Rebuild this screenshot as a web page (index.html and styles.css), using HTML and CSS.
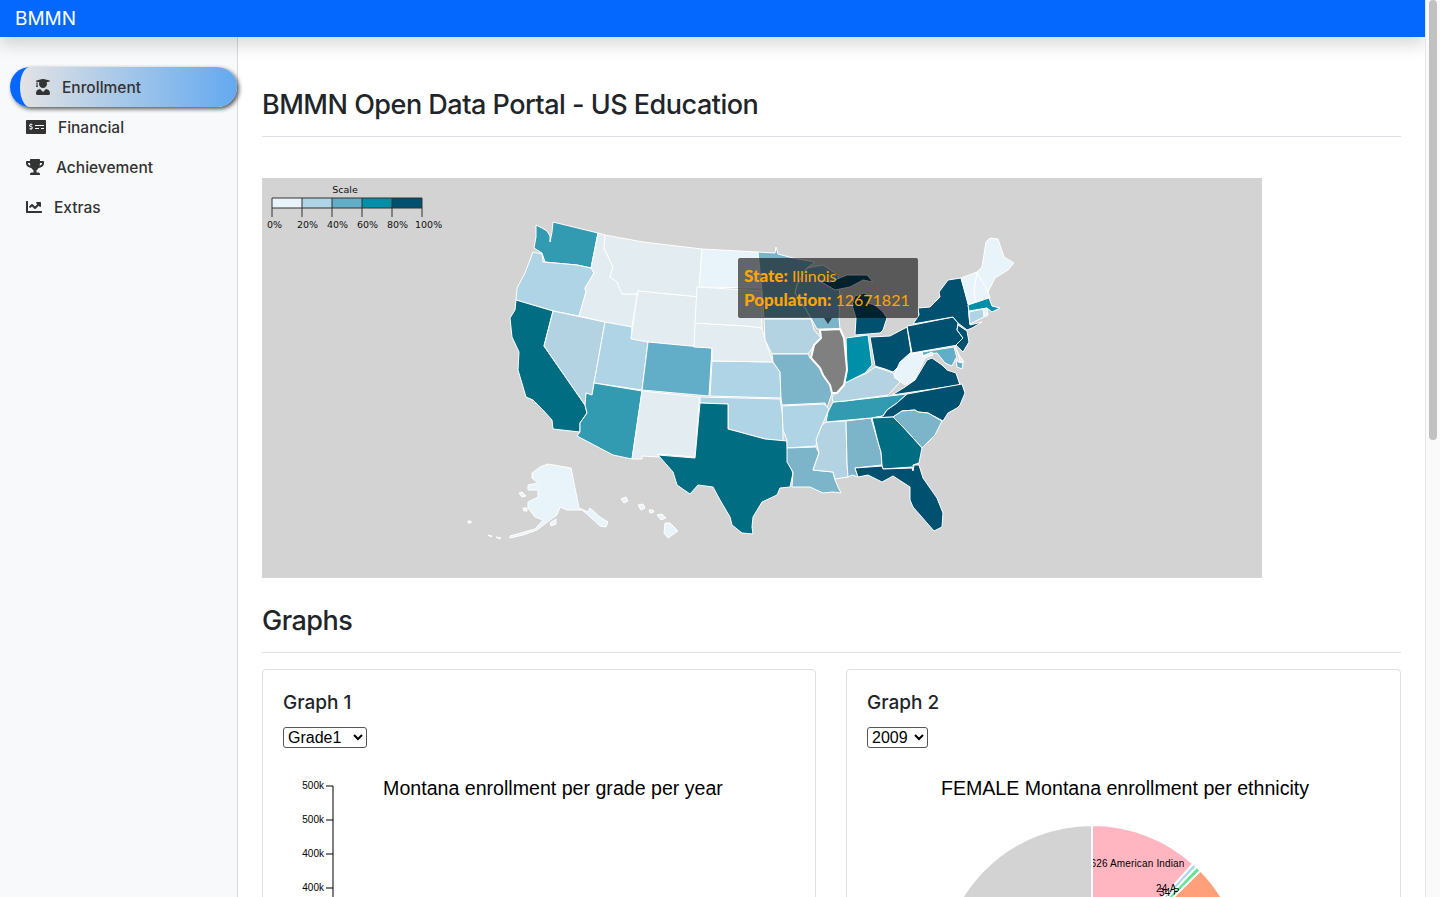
FILE: index.html
```html
<!DOCTYPE html>
<html lang="en">
<head>
<meta charset="utf-8">
<title>BMMN Open Data Portal</title>
<link rel="stylesheet" href="styles.css">
</head>
<body>
<div class="page">
  <header class="navbar"><a class="brand" href="#">BMMN</a></header>
  <div class="layout">
    <nav class="sidebar">
      <ul class="menu">
        <li><a class="link active" href="#"><svg class="icon i-grad" viewBox="0 0 448 512"><path d="M319.4 320.6L224 416l-95.4-95.4C57.1 323.7 0 382.2 0 454.4v9.6c0 26.5 21.5 48 48 48h352c26.5 0 48-21.5 48-48v-9.6c0-72.2-57.1-130.7-128.6-133.8zM13.6 79.8l6.4 1.5v58.4c-7 4.2-12 11.5-12 20.3 0 8.4 4.6 15.4 11.1 19.7L3.5 242c-1.7 6.9 2.1 14 7.6 14h41.8c5.5 0 9.3-7.1 7.6-14l-15.6-62.3C51.4 175.4 56 168.4 56 160c0-8.8-5-16.1-12-20.3V87.1l66 15.9c-8.6 17.2-14 36.4-14 57 0 70.7 57.3 128 128 128s128-57.3 128-128c0-20.6-5.3-39.8-14-57l96.3-23.2c18.2-4.4 18.2-27.1 0-31.5l-190.4-46c-13-3.1-26.7-3.1-39.7 0L13.6 48.2c-18.1 4.4-18.1 27.2 0 31.6z"/></svg>Enrollment</a></li>
        <li><a class="link" href="#"><svg class="icon i-money" viewBox="0 0 640 512"><path d="M608 32H32C14.33 32 0 46.33 0 64v384c0 17.67 14.33 32 32 32h576c17.67 0 32-14.33 32-32V64c0-17.67-14.33-32-32-32zM176 327.88V344c0 4.42-3.58 8-8 8h-16c-4.42 0-8-3.58-8-8v-16.29c-11.29-.58-22.27-4.52-31.37-11.35-3.9-2.93-4.1-8.77-.57-12.14l11.75-11.21c2.77-2.64 6.89-2.76 10.13-.73 3.87 2.42 8.26 3.72 12.82 3.72h28.11c6.5 0 11.8-5.92 11.8-13.19 0-5.95-3.61-11.19-8.77-12.73l-45-13.5c-18.59-5.58-31.58-23.42-31.58-43.39 0-24.52 19.05-44.44 42.67-45.07V152c0-4.42 3.58-8 8-8h16c4.42 0 8 3.58 8 8v16.29c11.29.58 22.27 4.51 31.37 11.35 3.9 2.93 4.1 8.77.57 12.14l-11.75 11.21c-2.77 2.64-6.89 2.76-10.13.73-3.87-2.43-8.26-3.72-12.82-3.72h-28.11c-6.5 0-11.8 5.92-11.8 13.19 0 5.95 3.61 11.19 8.77 12.73l45 13.5c18.59 5.58 31.58 23.42 31.58 43.39 0 24.53-19.05 44.44-42.67 45.07zM416 312c0 4.42-3.58 8-8 8H296c-4.42 0-8-3.58-8-8v-16c0-4.42 3.58-8 8-8h112c4.42 0 8 3.58 8 8v16zm160 0c0 4.42-3.58 8-8 8h-80c-4.42 0-8-3.58-8-8v-16c0-4.42 3.58-8 8-8h80c4.42 0 8 3.58 8 8v16zm0-96c0 4.42-3.58 8-8 8H296c-4.42 0-8-3.58-8-8v-16c0-4.42 3.58-8 8-8h272c4.42 0 8 3.58 8 8v16z"/></svg>Financial</a></li>
        <li><a class="link" href="#"><svg class="icon i-trophy" viewBox="0 0 576 512"><path d="M552 64H448V24c0-13.3-10.7-24-24-24H152c-13.3 0-24 10.7-24 24v40H24C10.7 64 0 74.7 0 88v56c0 35.7 22.5 72.4 61.9 100.7 31.5 22.7 69.8 37.1 110 41.7C203.3 338.5 240 360 240 360v72h-48c-35.3 0-64 20.7-64 56v12c0 6.6 5.4 12 12 12h296c6.6 0 12-5.4 12-12v-12c0-35.3-28.7-56-64-56h-48v-72s36.7-21.5 68.1-73.6c40.3-4.6 78.7-19 110-41.7 39.3-28.3 61.9-65 61.9-100.7V88c0-13.3-10.7-24-24-24zM99.3 192.8C74.9 175.2 64 155.6 64 144v-16h64.2c1 32.6 5.8 61.2 12.8 86.2-15.1-5.2-29.2-12.4-41.7-21.4zM512 144c0 16.1-17.7 36.1-35.3 48.8-12.5 9-26.7 16.2-41.8 21.4 7-25 11.8-53.6 12.8-86.2H512v16z"/></svg>Achievement</a></li>
        <li><a class="link" href="#"><svg class="icon i-chart" viewBox="0 0 512 512"><path d="M496 384H64V80c0-8.84-7.16-16-16-16H16C7.16 64 0 71.16 0 80v336c0 17.67 14.33 32 32 32h464c8.84 0 16-7.16 16-16v-32c0-8.84-7.16-16-16-16zM464 96H345.94c-21.38 0-32.09 25.85-16.97 40.97l32.4 32.4L288 242.75l-73.37-73.37c-12.5-12.5-32.76-12.5-45.25 0l-68.69 68.69c-6.25 6.25-6.25 16.38 0 22.63l22.62 22.62c6.25 6.25 16.38 6.25 22.63 0L192 237.25l73.37 73.37c12.5 12.5 32.76 12.5 45.25 0l96-96 32.4 32.4c15.12 15.12 40.97 4.41 40.97-16.97V112c.01-8.84-7.15-16-15.99-16z"/></svg>Extras</a></li>
      </ul>
    </nav>
    <main class="main">
      <h1 class="heading heading-top">BMMN Open Data Portal - US Education</h1>
      <div class="map-wrap">
        <svg class="map" viewBox="262 178 1000 400" width="1000" height="400">
          <g class="states">
            <polygon class="s20" points="536,225 542,228 547,231 550,236 550,242 552,232 553,222 598,233 591,268 577,265 555,263 545,262 542,253 534,248 536,237"/>
            <polygon class="s10" points="533,252 542,254 543,262 555,263 577,265 591,268 594,273 585,288 586,292 579,316 553,311 516,300 517,288 525,273"/>
            <polygon class="s30" points="516,300 553,311 544,346 585,405 587,413 580,423 580,432 553,429 552,420 543,410 533,400 526,397 518,370 519,352 512,337 510,318 515,310"/>
            <polygon class="s11" points="553,311 605,322 594,383 592,395 586,393 585,405 544,346"/>
            <polygon class="s05" points="598,233 605,235 604,248 613,267 610,277 617,282 622,294 637,294 632,327 605,322 579,316 586,292 585,288 594,273 591,268"/>
            <polygon class="s05" points="605,235 643,242 702,249 699,297 638,291 637,294 622,294 617,282 610,277 613,267 604,248"/>
            <polygon class="s05" points="638,291 699,297 694,347 648,342 631,339"/>
            <polygon class="s10" points="605,322 632,327 631,339 648,342 642,390 594,383"/>
            <polygon class="s15" points="648,342 712,348 709,396 642,390"/>
            <polygon class="s20" points="594,383 642,391 632,459 613,455 577,436 580,432 580,423 587,413 585,405 586,393 592,395"/>
            <polygon class="s05" points="642,391 700,397 699,403 695,457 658,454 659,457 642,456 642,459 632,459"/>
            <polygon class="s10" points="700,397 780,399 783,417 783,441 765,439 743,433 728,429 728,404 700,403"/>
            <polygon class="s30" points="700,403 728,404 728,429 743,433 765,439 787,441 788,462 793,473 790,487 780,488 777,495 762,502 753,517 752,527 753,534 742,533 732,525 730,517 720,500 713,487 698,485 690,494 677,485 673,472 658,455 695,458"/>
            <polygon class="s10" points="712,361 773,362 780,372 781,398 710,396"/>
            <polygon class="s05" points="695,323 747,326 762,328 765,340 770,354 773,362 712,361 712,348 694,347"/>
            <polygon class="s05" points="697,287 762,291 762,308 762,328 747,326 695,323"/>
            <polygon class="s00" points="702,249 758,252 762,288 699,287"/>
            <polygon class="s17" points="758,252 775,253 776,247 778,254 793,258 815,262 807,268 797,285 795,293 805,308 811,318 764,318 762,291"/>
            <polygon class="s11" points="764,319 811,319 814,330 821,338 813,347 808,354 772,354 765,340"/>
            <polygon class="s17" points="795,293 797,285 807,268 823,265 838,275 840,297 839,318 840,329 817,329 811,318 805,308"/>
            <polygon class="s17" points="772,354 808,354 810,358 820,368 823,375 830,385 832,393 827,408 825,403 782,405 781,398 780,372 773,362"/>
            <polygon class="s10" points="782,406 824,404 829,409 823,423 817,438 816,446 787,448 787,440 783,430"/>
            <polygon class="s17" points="787,448 816,447 819,453 813,470 833,472 835,480 838,487 841,493 833,492 823,493 810,487 792,487 793,472 787,462"/>
            <polygon class="s11" points="826,422 846,421 847,463 848,477 835,479 833,472 813,470 819,453 816,440 822,425"/>
            <polygon class="s17" points="846,421 871,418 878,442 881,452 882,465 855,468 858,477 852,475 848,477 847,463"/>
            <polygon class="s20" points="828,412 833,402 845,401 907,394 897,403 887,410 883,416 871,418 826,422"/>
            <polygon class="s11" points="832,397 843,383 867,373 875,367 885,370 893,373 900,382 888,395 845,401 833,402"/>
            <polygon class="s25" points="846,338 868,335 872,365 865,373 845,383 847,367"/>
            <polygon class="s40" points="870,337 890,336 907,327 911,352 907,360 897,368 893,372 885,369 875,366"/>
            <polygon class="s40" points="818,280 830,282 847,275 867,275 873,282 863,280 850,287 835,290"/>
            <polygon class="s40" points="856,318 852,305 855,296 864,293 870,296 868,303 875,305 883,312 887,318 883,330 880,333 855,335"/>
            <polygon class="s40" points="907,326 913,325 953,317 958,323 957,330 963,338 958,345 912,353"/>
            <polygon class="s40" points="913,324 919,315 918,308 930,307 940,297 939,292 948,280 961,278 968,301 969,317 970,325 982,322 972,328 967,330 958,323 953,317"/>
            <polygon class="s40" points="958,325 967,331 969,342 963,352 956,345 963,338 957,330"/>
            <polygon class="s05" points="955,346 959,355 964,362 960,362 958,354"/>
            <polygon class="s15" points="922,352 954,347 958,362 963,363 962,369 957,367 956,358 952,366 945,363 937,353 928,354 923,356"/>
            <polygon class="s40" points="892,395 905,387 915,380 927,360 932,358 942,365 947,370 956,373 960,385"/>
            <polygon class="s00" points="912,354 922,352 923,356 932,352 933,355 925,358 915,379 905,385 895,378 894,375 900,362 910,353"/>
            <polygon class="s40" points="907,394 962,384 965,393 960,405 957,408 948,413 943,421 928,413 918,412 915,410 902,411 893,417 872,418 883,416 887,410 897,403"/>
            <polygon class="s17" points="893,417 902,411 915,410 918,412 928,413 942,421 935,435 922,448 913,438 903,427"/>
            <polygon class="s30" points="872,418 893,417 903,427 913,438 922,448 919,463 913,465 913,470 912,467 883,469 882,465 881,452 878,442"/>
            <polygon class="s40" points="855,468 882,466 883,469 912,468 913,471 914,465 919,465 923,478 937,498 943,513 942,527 934,531 927,523 913,507 910,500 910,487 893,476 882,482 868,475 858,477"/>
            <polygon class="s00" points="977,272 982,267 986,242 990,238 998,239 1004,257 1014,263 1008,270 995,278 988,292"/>
            <polygon class="s00" points="977,272 988,292 990,298 975,302 974,290"/>
            <polygon class="s00" points="961,278 977,272 974,290 975,303 968,304"/>
            <polygon class="s25" points="968,305 989,298 992,306 1000,308 992,312 987,308 969,311"/>
            <polygon class="s10" points="969,312 983,309 984,317 970,324"/>
            <polygon class="s00" points="983,309 987,308 988,315 985,317"/>
            <polygon class="s00" points="532,473 540,467 548,464 571,468 579,508 588,512 590,508 600,517 608,522 606,527 600,526 588,515 582,510 567,510 560,507 557,515 550,520 537,530 523,535 510,538 510,536 535,529 543,520 535,517 528,508 528,502 538,497 538,490 528,490 528,485 538,483 532,478"/>
            <polygon class="s00" points="519,493 522,492 526,496 522,497"/>
            <polygon class="s00" points="523,508 527,508 527,511 524,511"/>
            <polygon class="s00" points="550,523 556,519 556,524 551,526"/>
            <polygon class="s00" points="488,535 492,536 491,537"/>
            <polygon class="s00" points="496,537 501,538 500,539"/>
            <polygon class="s00" points="468,521 471,521 471,523 468,523"/>
            <polygon class="s00" points="621,499 626,497 628,501 624,503"/>
            <polygon class="s00" points="638,505 643,504 645,508 641,510"/>
            <polygon class="s00" points="649,510 653,510 654,512 650,513"/>
            <polygon class="s00" points="657,515 662,514 666,518 661,520"/>
            <polygon class="s00" points="665,523 670,523 678,531 668,538 664,533"/>
          </g>
          <polygon class="illinois" points="820,330 840,329 844,338 847,370 844,385 837,393 832,393 830,385 823,375 820,368 811,358 814,345 821,338"/>
          <g class="legend">
            <text class="legend-title" x="345" y="193">Scale</text>
            <rect class="s00" x="272" y="198" width="30" height="10"/>
            <rect class="s10" x="302" y="198" width="30" height="10"/>
            <rect class="s15" x="332" y="198" width="30" height="10"/>
            <rect class="s25" x="362" y="198" width="30" height="10"/>
            <rect class="s40" x="392" y="198" width="30" height="10"/>
            <path class="legend-axis" d="M272 217V198H422V217M302 198V217M332 198V217M362 198V217M392 198V217M272 208H422"/>
            <text class="legend-label" x="267" y="228">0%</text>
            <text class="legend-label" x="297" y="228">20%</text>
            <text class="legend-label" x="327" y="228">40%</text>
            <text class="legend-label" x="357" y="228">60%</text>
            <text class="legend-label" x="387" y="228">80%</text>
            <text class="legend-label" x="415" y="228">100%</text>
          </g>
        </svg>
        <div class="tooltip">
          <div><b>State:</b> Illinois</div>
          <div><b>Population:</b> 12671821</div>
          <span class="tooltip-arrow"></span>
        </div>
      </div>
      <h2 class="heading heading-graphs">Graphs</h2>
      <div class="cards">
        <section class="card">
          <h5 class="card-title">Graph 1</h5>
          <select class="picker picker-wide"><option>Grade1</option></select>
          <svg class="chart" viewBox="283 765 513 300">
            <text class="chart-title" x="553" y="795">Montana enrollment per grade per year</text>
            <path class="axis" d="M326 786H333V1060M326 820H333M326 854H333M326 888H333"/>
            <text class="tick" x="324" y="789">500k</text>
            <text class="tick" x="324" y="823">500k</text>
            <text class="tick" x="324" y="857">400k</text>
            <text class="tick" x="324" y="891">400k</text>
          </svg>
        </section>
        <section class="card">
          <h5 class="card-title">Graph 2</h5>
          <select class="picker picker-narrow"><option>2009</option></select>
          <svg class="chart" viewBox="867 765 513 300">
            <text class="chart-title" x="1125" y="795">FEMALE Montana enrollment per ethnicity</text>
            <path class="slice pink" d="M1092 977V825A152 152 0 0 1 1193.3 863.7Z"/>
            <text class="slice-label" x="1090.5" y="867">626 American Indian</text>
            <path class="slice blue" d="M1092 977L1193.3 863.7A152 152 0 0 1 1196.8 866.9Z"/>
            <text class="slice-label" x="1156" y="892">24 Asian</text>
            <path class="slice green" d="M1092 977L1196.8 866.9A152 152 0 0 1 1200.6 870.6Z"/>
            <text class="slice-label" x="1159" y="896">34 Black</text>
            <path class="slice orange" d="M1092 977L1200.6 870.6A152 152 0 0 1 1208.4 1074.7Z"/>
            <path class="slice grey" d="M1092 977L940 977A152 152 0 0 1 1092 825Z"/>
          </svg>
        </section>
      </div>
    </main>
  </div>
</div>
<div class="scrollbar"><div class="thumb"></div></div>
</body>
</html>
```

FILE: styles.css
```css
* { box-sizing: border-box; }
html, body { margin: 0; height: 897px; overflow: hidden; }
body {
  display: flex;
  font-family: Inter, "Liberation Sans", sans-serif;
  color: #212529;
  background: #fff;
}
.page { flex: 1; min-width: 0; height: 897px; overflow: hidden; display: flex; flex-direction: column; }
.scrollbar { flex: 0 0 15px; height: 897px; background: #fafafa; border-left: 1px solid #e6e6e6; padding: 0 3px 0 3px; }
.thumb { width: 8px; height: 440px; background: #c1c1c1; border-radius: 4px; }

.navbar {
  position: relative;
  z-index: 2;
  flex: 0 0 37px;
  background: #0468ff;
  display: flex;
  align-items: center;
  padding-left: 15px;
  box-shadow: 0 8px 16px rgba(0, 0, 0, .15);
}
.brand { color: #fff; font-size: 19px; text-decoration: none; line-height: 24px; }

.layout { flex: 1; display: flex; min-height: 0; }
.sidebar { flex: 0 0 238px; min-width: 0; background: #f8f9fa; border-right: 1px solid #d9d9d9; }
.menu { list-style: none; margin: 0; padding: 30px 0 0; }
.menu li { height: 40px; }
.link {
  display: flex;
  align-items: center;
  height: 40px;
  padding-left: 26px;
  color: #333;
  font-size: 15.5px;
  font-weight: 500;
  text-decoration: none;
}
.link.active {
  width: 227px;
  margin-left: 10px;
  padding-left: 16px;
  border-left: 10px solid #0468ff;
  border-radius: 20px;
  background: linear-gradient(to right, #e3e3e3, #63a9f0);
  box-shadow: 2px 2px 4px #555;
}
.icon { fill: #333; flex: none; height: 16px; margin-right: 12px; }
.i-grad { width: 14px; }
.i-money { width: 20px; }
.i-trophy { width: 18px; }
.i-chart { width: 16px; }

.main { flex: 1; min-width: 0; padding: 51px 24px 0; }
.heading {
  margin: 0;
  font-size: 27px;
  letter-spacing: -.5px;
  font-weight: 500;
  line-height: 34px;
  padding-bottom: 14px;
  border-bottom: 1px solid #dee2e6;
  color: #212529;
}
.map-wrap { position: relative; width: 1000px; height: 400px; margin: 41px 0 26px; }
.map { display: block; background: #d3d3d3; }
.states polygon { stroke: #fff; stroke-width: 1; stroke-linejoin: round; }
.s00 { fill: #e9f4fa; }
.s05 { fill: #e3ecf1; }
.s10 { fill: #aed4e6; }
.s11 { fill: #b3d3e3; }
.s15 { fill: #62adc7; }
.s17 { fill: #7cb5ca; }
.s20 { fill: #339bb1; }
.s25 { fill: #008fa8; }
.s30 { fill: #006d83; }
.s40 { fill: #00506f; }
.illinois { fill: #808080; stroke: #fff; stroke-width: 2; stroke-linejoin: round; }
.legend-axis { fill: none; stroke: #333; stroke-width: 1; }
.legend-title, .legend-label { font-family: "DejaVu Sans", sans-serif; font-size: 9.5px; fill: #111; }
.legend-title { text-anchor: middle; }

.tooltip {
  position: absolute;
  left: 476px;
  top: 80px;
  width: 180px;
  height: 60px;
  padding: 6px;
  background: rgba(0, 0, 0, .58);
  border-radius: 2px;
  color: #ffa500;
  font-family: Lato, sans-serif;
  font-size: 16px;
  font-weight: 400;
  line-height: 24px;
  white-space: nowrap;
}
.tooltip b { font-weight: 900; font-size: 17px; }
.tooltip-arrow {
  position: absolute;
  left: 86px;
  top: 60px;
  width: 0;
  height: 0;
  border-left: 4px solid transparent;
  border-right: 4px solid transparent;
  border-top: 6px solid rgba(0, 0, 0, .65);
}

.cards { display: grid; grid-template-columns: 554px 1fr; gap: 30px; margin-top: 16px; }
.card { min-width: 0; height: 420px; border: 1px solid #dfdfdf; border-radius: 4px; padding: 21px 20px 0; }
.card-title { margin: 0 0 12px; font-size: 19px; font-weight: 500; line-height: 24px; color: #212529; }
.picker { display: block; height: 21px; font-family: "Liberation Sans", sans-serif; font-size: 16px; background: #fff; color: #000; border: 1px solid #555; border-radius: 3px; padding: 0; }
.picker-wide { width: 84px; }
.picker-narrow { width: 61px; }
.chart { display: block; width: 513px; height: 300px; margin-top: 17px; overflow: visible; }
.chart-title { font-family: "Liberation Sans", sans-serif; font-size: 19.6px; fill: #000; text-anchor: middle; }
.axis { fill: none; stroke: #000; stroke-width: 1; }
.tick { font-family: "Liberation Sans", sans-serif; font-size: 10px; text-anchor: end; fill: #000; }
.slice { stroke: #fff; stroke-width: 2; }
.slice-label { font-family: "Liberation Sans", sans-serif; font-size: 10px; letter-spacing: .15px; fill: #000; }
.pink { fill: #ffb6c1; }
.blue { fill: #add8e6; }
.green { fill: #5fe88f; }
.orange { fill: #ffa07a; }
.grey { fill: #d3d3d3; }
```
